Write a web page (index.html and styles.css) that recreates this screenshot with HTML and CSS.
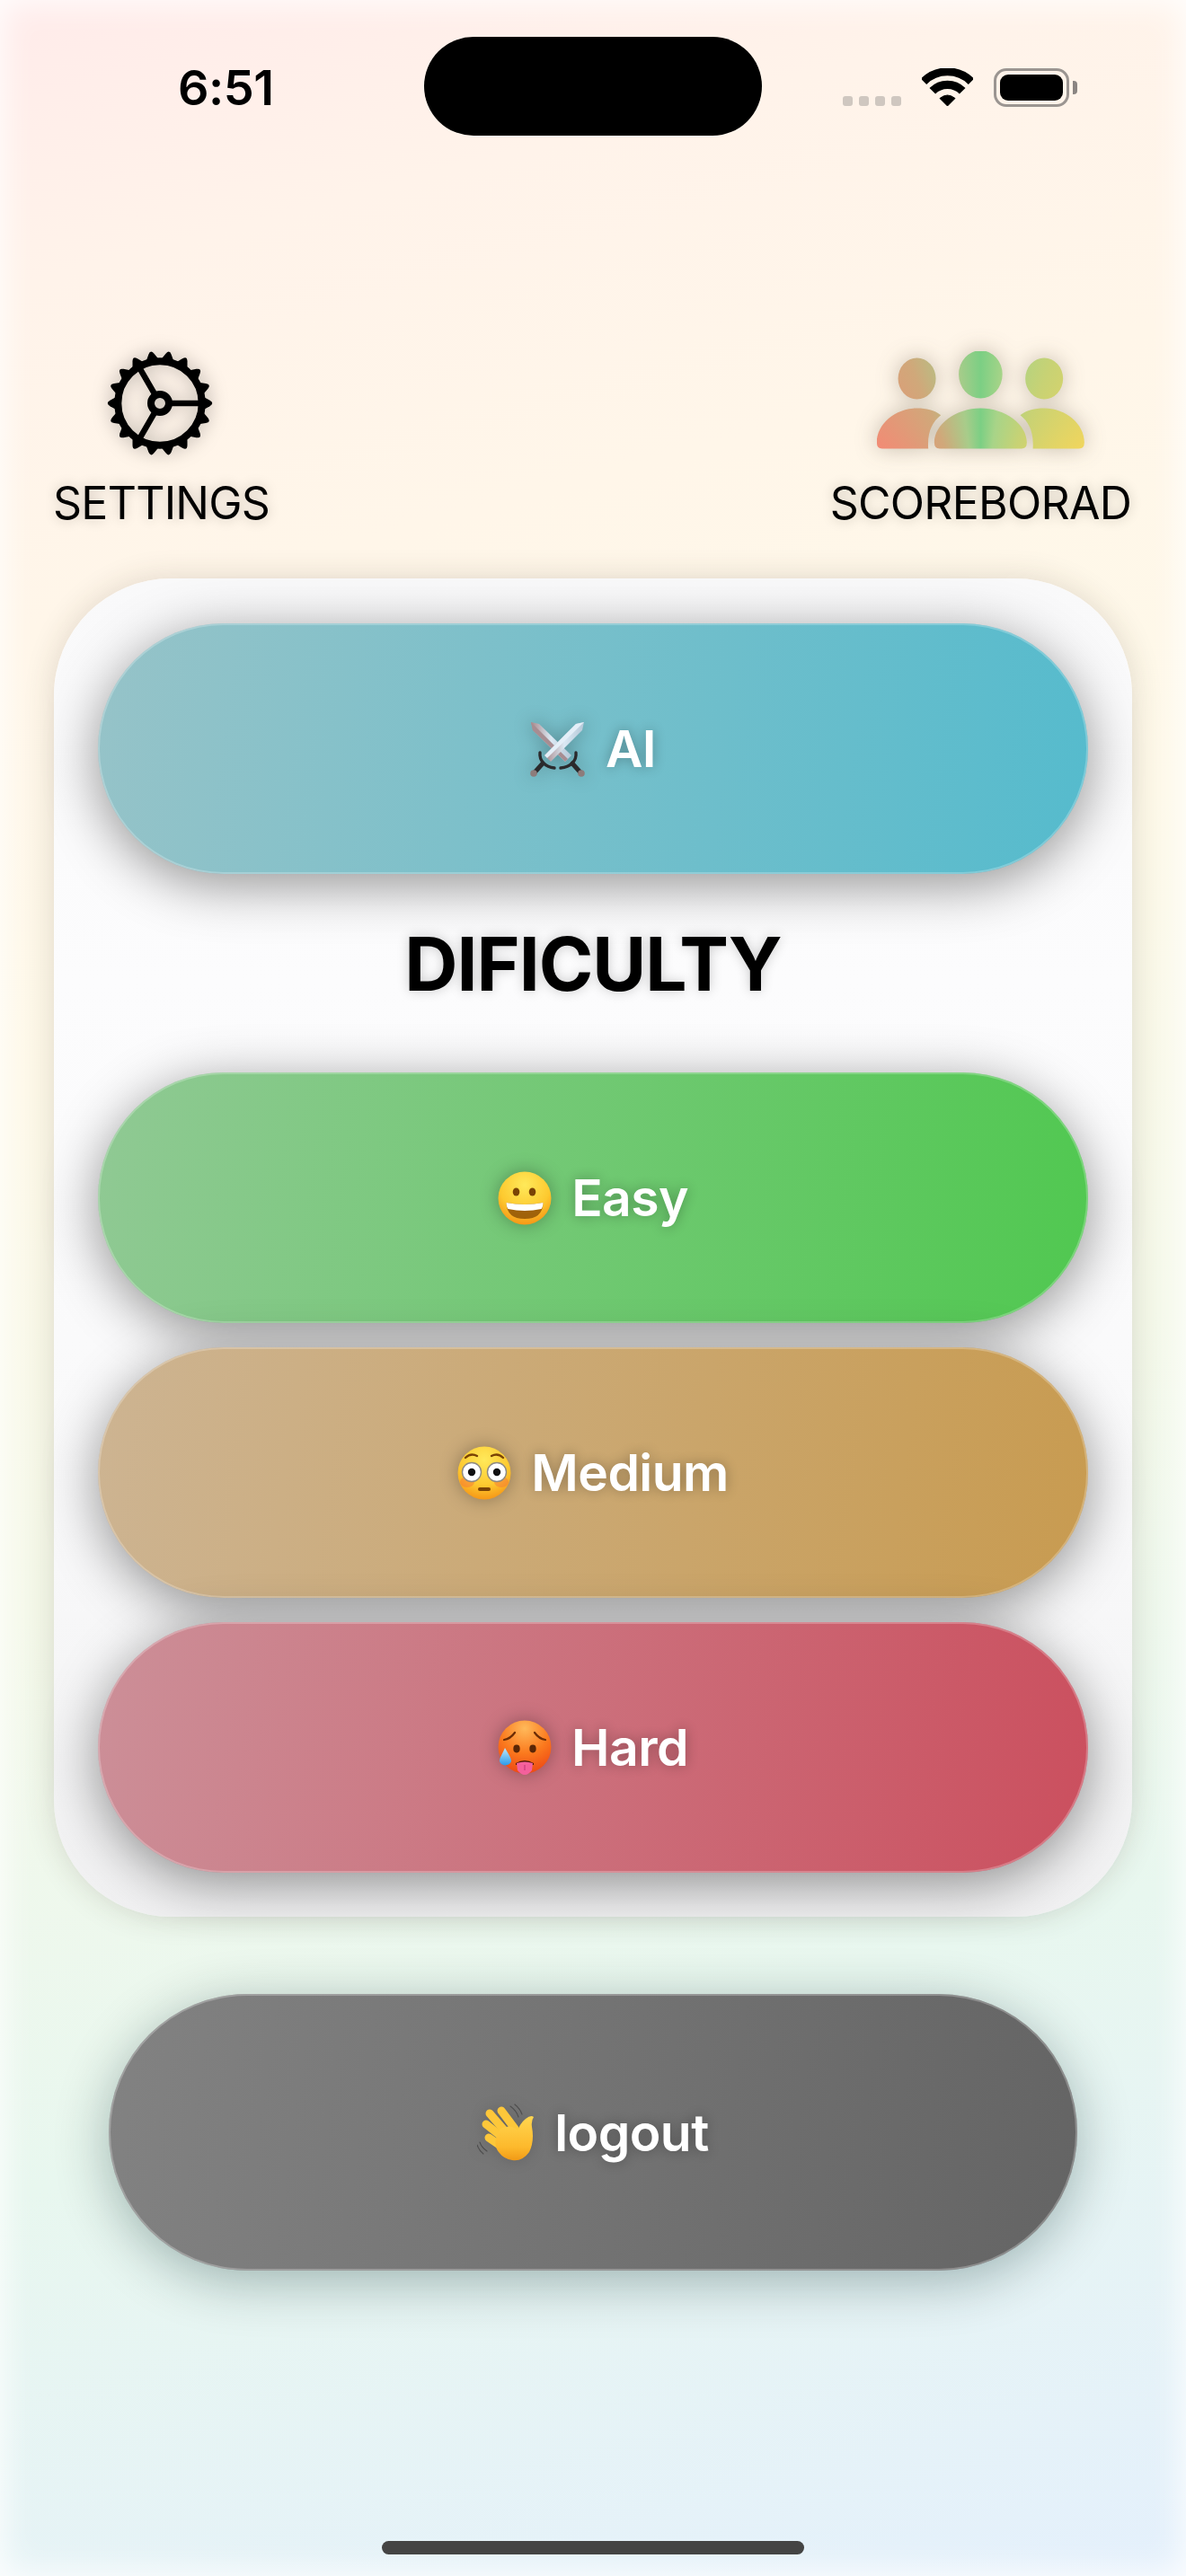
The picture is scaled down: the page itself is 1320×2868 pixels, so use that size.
FILE: index.html
```html
<!DOCTYPE html>
<html lang="en">
<head>
<meta charset="utf-8">
<title>Game menu</title>
<link rel="stylesheet" href="styles.css">
</head>
<body>
<svg class="defs" width="0" height="0" aria-hidden="true">
  <defs>
    <clipPath id="peopleClip">
      <ellipse cx="44.7" cy="31" rx="21" ry="23"/>
      <ellipse cx="115.5" cy="26.3" rx="24.3" ry="26.7"/>
      <ellipse cx="186.3" cy="31" rx="21" ry="23"/>
      <path d="M6,109 Q0,109 0,102 C0,82 20,64 45,64 C55,64 64,66 71.3,71.7 C62,79 56,90 57.3,109 Z"/>
      <path d="M70,109 Q64,109 64,102 C64,82 88,64 115.5,64 C143,64 167,82 167,102 Q167,109 161,109 Z"/>
      <path d="M225,109 Q231,109 231,102 C231,82 211,64 186,64 C176,64 167,66 159.7,71.7 C169,79 175,90 173.7,109 Z"/>
    </clipPath>
    <radialGradient id="faceYellow" cx="50%" cy="25%" r="80%">
      <stop offset="0" stop-color="#ffe95a"/><stop offset=".6" stop-color="#fdc92f"/><stop offset="1" stop-color="#f58f12"/>
    </radialGradient>
    <radialGradient id="faceHot" cx="50%" cy="15%" r="85%">
      <stop offset="0" stop-color="#ffb95a"/><stop offset=".55" stop-color="#fb7a1e"/><stop offset="1" stop-color="#ee4a14"/>
    </radialGradient>
    <linearGradient id="handFill" x1="0" y1="0" x2="0" y2="1">
      <stop offset="0" stop-color="#ffd650"/><stop offset=".7" stop-color="#fdb92c"/><stop offset="1" stop-color="#f19a16"/>
    </linearGradient>
    <linearGradient id="dropFill" x1="0" y1="0" x2="0" y2="1">
      <stop offset="0" stop-color="#bfe9fb"/><stop offset="1" stop-color="#2a9bea"/>
    </linearGradient>
    <linearGradient id="bladeA" x1="0" y1="0" x2="1" y2="0">
      <stop offset="0" stop-color="#a8898c"/><stop offset=".5" stop-color="#dbe9f4"/><stop offset="1" stop-color="#b5c8d8"/>
    </linearGradient>
  </defs>
</svg>

<main class="screen">
  <header class="status">
    <time class="clock">6:51</time>
    <div class="island"></div>
    <div class="status-icons">
      <div class="signal"><i></i><i></i><i></i><i></i></div>
      <svg class="wifi" width="57" height="42" viewBox="0 0 57 42">
        <path d="M2,14.8 A37.5,37.5 0 0 1 55,14.8" fill="none" stroke="#000" stroke-width="9"/>
        <path d="M11.8,25.3 A23.6,23.6 0 0 1 45.2,25.3" fill="none" stroke="#000" stroke-width="9.4"/>
        <path d="M28.5,42 L20,33.5 Q28.5,26.5 37,33.5 Z" fill="#000" stroke="#000" stroke-width="1" stroke-linejoin="round"/>
      </svg>
      <div class="battery"><span class="battery-level"></span></div>
      <span class="battery-cap"></span>
    </div>
  </header>

  <nav class="top-links">
    <a class="top-link">
      <span class="top-icon">
        <svg class="gear" width="124" height="124" viewBox="-62 -62 124 124">
          <defs>
            <path id="tooth" d="M47,-8 L55.5,-3.2 Q61,0 55.5,3.2 L47,8 Z"/>
          </defs>
          <g fill="#000">
            <use href="#tooth"/><use href="#tooth" transform="rotate(20)"/><use href="#tooth" transform="rotate(40)"/>
            <use href="#tooth" transform="rotate(60)"/><use href="#tooth" transform="rotate(80)"/><use href="#tooth" transform="rotate(100)"/>
            <use href="#tooth" transform="rotate(120)"/><use href="#tooth" transform="rotate(140)"/><use href="#tooth" transform="rotate(160)"/>
            <use href="#tooth" transform="rotate(180)"/><use href="#tooth" transform="rotate(200)"/><use href="#tooth" transform="rotate(220)"/>
            <use href="#tooth" transform="rotate(240)"/><use href="#tooth" transform="rotate(260)"/><use href="#tooth" transform="rotate(280)"/>
            <use href="#tooth" transform="rotate(300)"/><use href="#tooth" transform="rotate(320)"/><use href="#tooth" transform="rotate(340)"/>
          </g>
          <g fill="none" stroke="#000">
            <circle r="46.7" stroke-width="8"/>
            <circle r="10" stroke-width="8"/>
            <path d="M13,0 H46 M-6.5,-11.3 L-23,-39.8 M-6.5,11.3 L-23,39.8" stroke-width="6.5"/>
          </g>
        </svg>
      </span>
      <span class="top-label">SETTINGS</span>
    </a>
    <a class="top-link">
      <span class="top-icon">
        <span class="people-wrap"><span class="people"></span></span>
      </span>
      <span class="top-label">SCOREBORAD</span>
    </a>
  </nav>

  <section class="panel">
    <button class="pill pill-ai">
      <svg class="emoji" width="62" height="62" viewBox="0 0 62 62">
        <polygon points="1,1 10,3 46,38 39,45 3,10" fill="url(#bladeA)"/>
        <polygon points="1,1 3,10 39,45 42,42" fill="#a78d92"/>
        <g fill="none" stroke-linecap="round">
          <path d="M14,47 L5,57" stroke="#2b2a2c" stroke-width="5"/>
          <path d="M47,47 L56,57" stroke="#2b2a2c" stroke-width="5"/>
          <path d="M11,35 C10,44 17,51 27,52" stroke="#2b2a2c" stroke-width="3.4"/>
          <path d="M51,35 C52,44 45,51 34,52" stroke="#2b2a2c" stroke-width="3.4"/>
        </g>
        <polygon points="60,1 58,10 23,45 16,38 51,3" fill="url(#bladeA)"/>
        <polygon points="60,1 51,3 16,38 19,41" fill="#e4eff8"/>
        <circle cx="4" cy="58" r="3.8" fill="#8d7c7b"/>
        <circle cx="57" cy="58" r="3.8" fill="#8d7c7b"/>
      </svg>
      <span>AI</span>
    </button>

    <h1 class="heading">DIFICULTY</h1>

    <div class="levels">
      <button class="pill pill-easy">
        <svg class="emoji" width="60" height="60" viewBox="0 0 60 60">
          <circle cx="30" cy="30" r="29.5" fill="url(#faceYellow)"/>
          <ellipse cx="20.5" cy="23" rx="3.8" ry="4.6" fill="#7a4305"/>
          <ellipse cx="38.5" cy="23" rx="3.8" ry="4.6" fill="#7a4305"/>
          <path d="M9.5,35 Q30,39 50.5,35 Q50,53 30,53 Q10,53 9.5,35 Z" fill="#a0620a"/>
          <path d="M9.5,35 Q30,39 50.5,35 Q50.3,40 48.5,42 Q30,46 11.5,42 Q9.7,40 9.5,35 Z" fill="#fff"/>
        </svg>
        <span>Easy</span>
      </button>
      <button class="pill pill-medium">
        <svg class="emoji" width="60" height="60" viewBox="0 0 60 60">
          <circle cx="30" cy="30" r="29.5" fill="url(#faceYellow)"/>
          <ellipse cx="11" cy="40" rx="8" ry="6" fill="#f4703a" opacity=".45"/>
          <ellipse cx="49" cy="40" rx="8" ry="6" fill="#f4703a" opacity=".45"/>
          <circle cx="16" cy="29" r="10.5" fill="#fff" stroke="#8f8a80" stroke-width="1.4"/>
          <circle cx="44" cy="29" r="10.5" fill="#fff" stroke="#8f8a80" stroke-width="1.4"/>
          <circle cx="16" cy="29" r="4.2" fill="#111"/>
          <circle cx="44" cy="29" r="4.2" fill="#111"/>
          <path d="M9,13 Q15,7 22,11 M38,11 Q45,7 51,13" fill="none" stroke="#7a4305" stroke-width="2.4" stroke-linecap="round"/>
          <rect x="23" y="46" width="14" height="4" rx="2" fill="#7a4305"/>
        </svg>
        <span>Medium</span>
      </button>
      <button class="pill pill-hard">
        <svg class="emoji" width="60" height="62" viewBox="0 0 60 62">
          <circle cx="30" cy="30" r="29.5" fill="url(#faceHot)"/>
          <path d="M7,22 Q14,21 19,14 M41,14 Q46,21 53,22" fill="none" stroke="#6b2c05" stroke-width="2.2" stroke-linecap="round"/>
          <ellipse cx="21" cy="32" rx="3.7" ry="4.4" fill="#5a2606"/>
          <ellipse cx="39" cy="32" rx="3.7" ry="4.4" fill="#5a2606"/>
          <path d="M20,48 Q30,42 40,48 L40,50 L20,50 Z" fill="#4d1808"/>
          <path d="M21,48 Q30,45 39,48 L38,56 Q30,66 22,56 Z" fill="#f4609c"/>
          <path d="M30,50 V56" stroke="#c93a7a" stroke-width="1.2"/>
          <path d="M8,31 C12,38 15,42 15,46 A7,7 0 0 1 2,46 C2,42 5,38 8,31 Z" fill="url(#dropFill)"/>
        </svg>
        <span>Hard</span>
      </button>
    </div>
  </section>

  <button class="pill pill-logout">
    <svg class="emoji emoji-hand" width="64" height="64" viewBox="0 0 64 64">
      <path d="M37,3 Q44,8 46,15 M42,1 Q48,6 50,12 M3,43 Q5,49 11,53 M0,46 Q2,52 7,56" fill="none" stroke="#4e4e4e" stroke-width="1.2" stroke-linecap="round"/>
      <g fill="none" stroke-linecap="round">
        <path d="M27,8 L42,28" stroke="#fdc73a" stroke-width="9"/>
        <path d="M14,11 L33,33" stroke="#fdc73a" stroke-width="9"/>
        <path d="M10,23 L30,39" stroke="#fdc73a" stroke-width="9"/>
        <path d="M13,38 L29,49" stroke="#fdc73a" stroke-width="9"/>
      </g>
      <path d="M26,28 Q38,22 45,30 Q48,22 54,17 Q60,12 63,15 Q60,19 61,26 Q64,42 58,54 Q50,65 39,63 Q30,62 24,54 Q18,46 22,36 Z" fill="url(#handFill)"/>
    </svg>
    <span>logout</span>
  </button>

  <div class="home-indicator"></div>
</main>
</body>
</html>
```

FILE: styles.css
```css
* { box-sizing: border-box; }

html, body { margin: 0; padding: 0; }

body {
  font-family: "Inter", "Liberation Sans", sans-serif;
  color: #000;
}

.defs { position: absolute; }

.screen {
  width: 1320px;
  height: 2868px;
  display: flex;
  flex-direction: column;
  overflow: hidden;
  background: linear-gradient(165deg, #ffebea 0%, #fff3ea 10%, #fff6e9 22%, #fef9e9 38%, #f5f9ea 56%, #e8f7ef 76%, #e4f0fc 100%);
  box-shadow: inset 0 0 36px 4px rgba(255, 255, 255, .9);
}

/* status bar */
.status {
  display: grid;
  grid-template-columns: 472px 376px 1fr;
  height: 110px;
  margin-top: 41px;
  align-items: center;
}

.clock {
  padding-left: 198px;
  font-size: 54px;
  font-weight: 600;
  line-height: 1;
  letter-spacing: -.5px;
  margin-top: 4px;
}

.island {
  height: 110px;
  background: #000;
  border-radius: 55px;
}

.status-icons {
  display: flex;
  align-items: flex-end;
  height: 43px;
  margin-top: 2px;
  padding-left: 90px;
}

.signal {
  display: flex;
  gap: 7px;
  margin-right: 23px;
  padding-bottom: 1px;
}

.signal i {
  display: block;
  width: 11px;
  height: 11px;
  border-radius: 3px;
  background: #cfc7c0;
}

.wifi { display: block; margin-bottom: 1px; }

.battery {
  width: 84px;
  height: 43px;
  margin-left: 23px;
  padding: 4px;
  border: 3px solid #9b9591;
  border-radius: 14px;
}

.battery-level {
  display: block;
  height: 100%;
  background: #000;
  border-radius: 9px;
}

.battery-cap {
  width: 5px;
  height: 15px;
  margin: 0 0 14px 4px;
  background: #8a8582;
  border-radius: 0 4px 4px 0;
}

/* top links */
.top-links {
  display: flex;
  justify-content: space-between;
  margin-top: 236px;
  padding: 0 61px 0 59px;
}

.top-link {
  display: flex;
  flex-direction: column;
  align-items: center;
}

.top-icon {
  display: flex;
  align-items: center;
  justify-content: center;
  height: 124px;
}

.gear {
  display: block;
  margin-right: 4px;
  filter: drop-shadow(0 0 10px rgba(0, 0, 0, .28));
}

.people-wrap {
  display: block;
  margin-top: -8px;
  filter: drop-shadow(0 0 12px rgba(70, 60, 40, .3));
}

.people {
  display: block;
  width: 231px;
  height: 109px;
  clip-path: url(#peopleClip);
  background: conic-gradient(from -55deg at 115.5px 200px, #f78774 0deg, #d0a87a 32deg, #a8cc8a 47deg, #7ccf84 55deg, #a8d488 63deg, #c8d274 78deg, #f6d65a 110deg, #f78774 360deg);
}

.top-label {
  margin-top: 19px;
  font-size: 50px;
  font-weight: 400;
  line-height: 60px;
  letter-spacing: -.75px;
  white-space: nowrap;
  text-shadow: 0 0 14px rgba(0, 0, 0, .22);
}

/* panel */
.panel {
  display: flex;
  flex-direction: column;
  margin: 54px 60px 0;
  padding: 50px 49px 49px;
  border-radius: 130px;
  background: linear-gradient(180deg, #f9f9fa 0%, #fcfcfd 30%, #f9f9fa 70%, #f1f1f2 100%);
  box-shadow: 0 0 34px rgba(60, 50, 30, .16);
}

.heading {
  display: flex;
  align-items: center;
  justify-content: center;
  height: 221px;
  margin: 0;
  padding-bottom: 20px;
  font-size: 82px;
  font-weight: 700;
  letter-spacing: -1px;
  text-shadow: 0 0 14px rgba(0, 0, 0, .2);
}

.levels {
  display: flex;
  flex-direction: column;
  gap: 27px;
}

/* pills */
.pill {
  display: flex;
  align-items: center;
  justify-content: center;
  gap: 22px;
  width: 100%;
  height: 279px;
  padding: 0;
  border: 0;
  border-radius: 140px;
  color: #fff;
  font: 600 57px "Inter", "Liberation Sans", sans-serif;
  letter-spacing: -.6px;
  text-shadow: 0 0 14px rgba(0, 0, 0, .3);
  box-shadow: inset 0 0 0 2px rgba(255, 255, 255, .24), 0 12px 60px rgba(0, 0, 0, .42);
}

.emoji {
  display: block;
  flex: none;
  filter: drop-shadow(0 0 10px rgba(0, 0, 0, .3));
}

.emoji-hand { filter: drop-shadow(0 0 8px rgba(0, 0, 0, .15)); }

.pill-ai     { background-image: linear-gradient(98deg, #96c3c8, #55bbcd); }
.pill-easy   { background-image: linear-gradient(98deg, #90c994, #50c850); }
.pill-medium { background-image: linear-gradient(98deg, #cdb492, #c89b50); }
.pill-hard   { background-image: linear-gradient(98deg, #cc8f98, #cb4f5e); }

.pill-logout {
  flex: none;
  width: 1078px;
  height: 308px;
  margin: 86px 0 0 121px;
  border-radius: 154px;
  background-image: linear-gradient(98deg, #828282, #646464);
  box-shadow: inset 0 0 0 2px rgba(255, 255, 255, .26), 0 12px 60px rgba(0, 40, 40, .32);
}

/* home indicator */
.home-indicator {
  flex: none;
  width: 470px;
  height: 15px;
  margin: auto auto 24px;
  border-radius: 8px;
  background: #444;
}
```
